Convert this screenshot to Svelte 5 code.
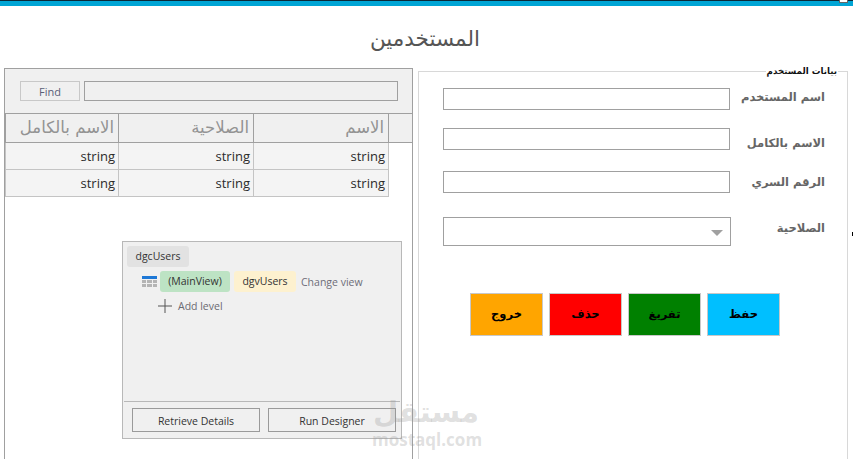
<script lang="ts">
  const columns = ['الاسم', 'الصلاحية', 'الاسم بالكامل'];
  const rows = [1, 2];

  const fields = [
    { label: 'اسم المستخدم', cls: 'f1' },
    { label: 'الاسم بالكامل', cls: 'f2' },
    { label: 'الرقم السري', cls: 'f3' },
  ];

  const actions = [
    { label: 'خروج', color: '#ffa500' },
    { label: 'حذف', color: '#ff0000' },
    { label: 'تفريغ', color: '#008000' },
    { label: 'حفظ', color: '#00bfff' },
  ];
</script>

<div class="page">
  <div class="topbar"></div>
  <span class="top-handle"></span>
  <span class="edge-mark"></span>
  <h1 class="title">المستخدمين</h1>

  <div class="content">
    <section class="grid-panel">
      <div class="find-band">
        <button class="find-btn">Find</button>
        <div class="find-input"></div>
      </div>

      <div class="grid-head">
        {#each [...columns].reverse() as c}
          <div class="hcell">{c}</div>
        {/each}
        <div class="hcell corner"></div>
      </div>
      {#each rows as r}
        <div class="grid-row">
          {#each columns as c}
            <div class="cell">string</div>
          {/each}
        </div>
      {/each}

      <div class="designer">
        <div class="designer-body">
          <span class="chip-name">dgcUsers</span>
          <div class="level">
            <svg class="table-icon" width="15" height="11" viewBox="0 0 15 11">
              <rect x="0" y="0" width="15" height="3" fill="#1e78d6" />
              <g fill="#b4b4b4">
                <rect x="0" y="4" width="4" height="3" />
                <rect x="5" y="4" width="5" height="3" />
                <rect x="11" y="4" width="4" height="3" />
                <rect x="0" y="8" width="4" height="3" />
                <rect x="5" y="8" width="5" height="3" />
                <rect x="11" y="8" width="4" height="3" />
              </g>
            </svg>
            <span class="chip green">(MainView)</span>
            <span class="chip yellow">dgvUsers</span>
            <span class="change">Change view</span>
          </div>
          <div class="add">
            <svg width="14" height="14" viewBox="0 0 14 14">
              <path d="M7 0v14M0 7h14" stroke="#555" stroke-width="1" fill="none" />
            </svg>
            <span>Add level</span>
          </div>
        </div>
        <div class="designer-foot">
          <button class="foot-btn">Retrieve Details</button>
          <button class="foot-btn">Run Designer</button>
        </div>
      </div>
    </section>

    <section class="form-group">
      <span class="legend">بيانات المستخدم</span>

      {#each fields as f}
        <div class="form-row {f.cls}">
          <div class="text-input"></div>
          <span class="label">{f.label}</span>
        </div>
      {/each}

      <div class="form-row f4">
        <div class="select">
          <span class="arrow"></span>
        </div>
        <span class="label">الصلاحية</span>
      </div>

      <div class="actions">
        {#each actions as a}
          <button class="action" style="background:{a.color}">{a.label}</button>
        {/each}
      </div>
    </section>
  </div>

  <div class="watermark">
    <div class="wm-ar">مستقل</div>
    <div class="wm-en">mostaql.com</div>
  </div>
</div>

<style>
  :global(body) {
    margin: 0;
    background: #fff;
    overflow: hidden;
  }

  .page {
    position: relative;
    width: 853px;
    height: 459px;
    overflow: hidden;
    font-family: "Open Sans", "DejaVu Sans", sans-serif;
    display: flex;
    flex-direction: column;
  }

  .topbar {
    height: 5px;
    flex: none;
    background: #00a5d5;
    border-top: 1px solid #0a2a3a;
  }

  .top-handle {
    position: absolute;
    left: 839px;
    top: 0;
    width: 7px;
    height: 2px;
    background: #fff;
    border: 1px solid #666;
    border-top: none;
  }

  .edge-mark {
    position: absolute;
    left: 852px;
    top: 232px;
    width: 1px;
    height: 4px;
    background: #000;
  }

  .title {
    margin: 0;
    height: 62px;
    flex: none;
    box-sizing: border-box;
    padding: 18px 3px 0 0;
    text-align: center;
    font-family: "DejaVu Sans", sans-serif;
    font-weight: 400;
    font-size: 21.5px;
    line-height: 30px;
    color: #555;
  }

  .content {
    flex: 1;
    display: flex;
    padding-left: 4px;
    padding-right: 5px;
    min-height: 0;
  }

  /* left side */
  .grid-panel {
    width: 409px;
    box-sizing: border-box;
    border: 1px solid #a0a0a0;
    border-bottom: none;
    height: 400px;
  }

  .find-band {
    height: 44px;
    box-sizing: border-box;
    background: #f0f0f0;
    padding: 12px 14px 0 15px;
    display: flex;
    gap: 4px;
  }

  .find-btn {
    width: 60px;
    height: 20px;
    padding: 0;
    border: 1px solid #c8c8c8;
    background: #f0f0f0;
    font-family: "Open Sans", sans-serif;
    font-size: 11px;
    color: #5a5f78;
  }

  .find-input {
    flex: 1;
    height: 20px;
    box-sizing: border-box;
    border: 1px solid #a0a0a0;
    background: #f0f0f0;
  }

  .grid-head {
    display: grid;
    grid-template-columns: 113px 135px 135px 1fr;
    height: 30px;
    box-sizing: border-box;
    background: #f0f0f0;
    border-top: 1px solid #a0a0a0;
    border-bottom: 1px solid #a0a0a0;
  }

  .hcell {
    border-left: 1px solid #a0a0a0;
    text-align: right;
    padding-right: 4px;
    font-family: "DejaVu Sans", sans-serif;
    font-size: 16.5px;
    line-height: 27px;
    color: #939393;
  }

  .corner {
    padding: 0;
  }

  .grid-row {
    display: grid;
    grid-template-columns: 113px 135px 136px;
    width: 384px;
    height: 27px;
    box-sizing: border-box;
    background: #f4f4f4;
    border-bottom: 1px solid #c4c4c4;
  }

  .cell {
    border-left: 1px solid #c4c4c4;
    text-align: right;
    padding-right: 3px;
    font-size: 13px;
    line-height: 27px;
    color: #2b2b2b;
  }

  .grid-row .cell:last-child {
    border-right: 1px solid #c4c4c4;
  }

  .designer {
    width: 280px;
    height: 198px;
    box-sizing: border-box;
    margin: 44px 0 0 117px;
    border: 1px solid #b8b8b8;
    background: #f0f0f0;
    display: flex;
    flex-direction: column;
    font-size: 10.5px;
    color: #333;
  }

  .designer-body {
    flex: 1;
    padding: 4px 0 0 4px;
  }

  .chip-name {
    display: inline-block;
    width: 62px;
    height: 21px;
    line-height: 20px;
    text-align: center;
    background: #e2e2e2;
    border-radius: 3px;
  }

  .level {
    display: flex;
    align-items: center;
    margin-top: 4px;
    padding-left: 15px;
  }

  .table-icon {
    margin-right: 3px;
  }

  .chip {
    height: 21px;
    line-height: 20px;
    text-align: center;
    border-radius: 3px;
  }

  .green {
    width: 70px;
    background: #bde3c4;
  }

  .yellow {
    width: 62px;
    margin-left: 4px;
    background: #fdf1cf;
  }

  .change {
    margin-left: 5px;
    color: #6d6d78;
  }

  .add {
    display: flex;
    align-items: center;
    gap: 6px;
    margin-top: 7px;
    padding-left: 31px;
    color: #6a6a72;
  }

  .designer-foot {
    height: 37px;
    flex: none;
    box-sizing: border-box;
    margin: 0 1px;
    border-top: 1px solid #b8b8b8;
    padding: 6px 4px 0 8px;
    display: flex;
    gap: 8px;
  }

  .foot-btn {
    width: 128px;
    height: 24px;
    padding: 1px 0 0;
    border: 1px solid #9a9a9a;
    background: #f0f0f0;
    font-family: "Open Sans", sans-serif;
    font-size: 10.5px;
    color: #333;
  }

  /* right side */
  .form-group {
    position: relative;
    margin-left: 5px;
    margin-top: 3px;
    flex: 1;
    border: 1px solid #d8d8d8;
    border-bottom: none;
    padding-left: 24px;
  }

  .legend {
    position: absolute;
    right: 9px;
    top: -8px;
    padding: 0 1px;
    background: #fff;
    font-family: "DejaVu Sans", sans-serif;
    font-size: 8.7px;
    font-weight: 700;
    line-height: 14px;
    color: #111;
  }

  .form-row {
    display: flex;
    align-items: flex-start;
    height: 22px;
  }

  .f1 { margin-top: 16px; }
  .f2 { margin-top: 18px; }
  .f3 { margin-top: 21px; }
  .f4 { margin-top: 24px; height: 29px; }

  .text-input {
    width: 287px;
    height: 22px;
    box-sizing: border-box;
    border: 1px solid #a0a0a0;
    background: #fff;
  }

  .select {
    width: 288px;
    height: 29px;
    box-sizing: border-box;
    border: 1px solid #a0a0a0;
    position: relative;
  }

  .arrow {
    position: absolute;
    right: 7px;
    top: 12px;
    border-left: 6px solid transparent;
    border-right: 6px solid transparent;
    border-top: 6px solid #a0a0a0;
  }

  .label {
    flex: 1;
    padding-right: 22px;
    text-align: right;
    font-family: "DejaVu Sans", sans-serif;
    font-size: 11.5px;
    font-weight: 700;
    line-height: 18px;
    color: #666;
  }

  .f2 .label { margin-top: 6px; }
  .f3 .label { margin-top: 2px; }
  .f4 .label { margin-top: 2px; }

  .actions {
    display: flex;
    gap: 6px;
    margin: 47px 0 0 27px;
  }

  .action {
    width: 73px;
    height: 43px;
    padding: 0 0 1px;
    border: 1px solid #c8c8c8;
    font-family: "DejaVu Sans", sans-serif;
    font-size: 11.5px;
    font-weight: 700;
    color: #000;
  }

  .watermark {
    position: absolute;
    left: 372px;
    top: 394px;
    width: 108px;
    text-align: center;
    color: rgba(150, 150, 150, 0.3);
    font-family: "DejaVu Sans", sans-serif;
    font-weight: 700;
    pointer-events: none;
  }

  .wm-ar {
    font-size: 29px;
    line-height: 37px;
  }

  .wm-en {
    font-family: "Open Sans", sans-serif;
    font-weight: 700;
    font-size: 17px;
    line-height: 18px;
  }
</style>
